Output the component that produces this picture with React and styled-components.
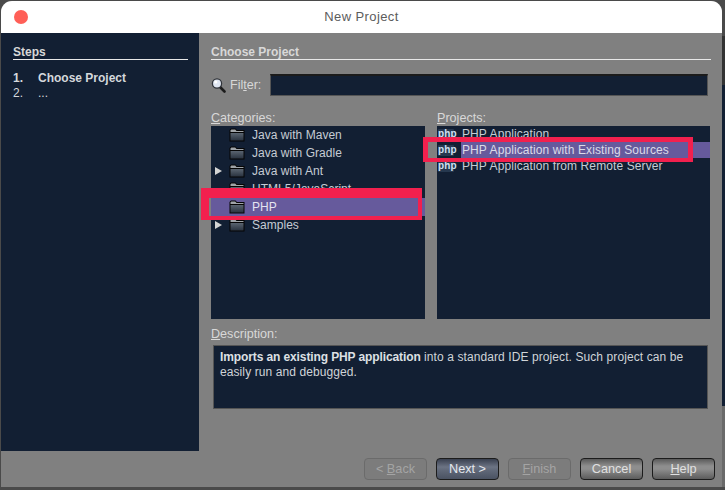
import React from "react";
import styled, { createGlobalStyle } from "styled-components";

const Global = createGlobalStyle`
  html, body { margin: 0; padding: 0; width: 725px; height: 490px; overflow: hidden; background: #3c3c3c; }
  body { font-family: "Liberation Sans", Arial, sans-serif; font-size: 12px; }
  #root { width: 725px; height: 490px; }
`;
const Desktop = styled.div`
  width: 725px; height: 490px; padding: 1px 3px 3px 1px; box-sizing: border-box;
  background: linear-gradient(#4a4a4a 0 36px, #333 36px 85px, #121f33 85px 406px, #6a6a6a 406px 487px, #4a4a4a 487px) right / 3px 100% no-repeat, #4a4a4a;
`;
const Win = styled.div`
  position: relative; width: 721px; height: 486px; display: flex; flex-direction: column;
  background: #808080; border-radius: 11px 11px 0 0; overflow: hidden;
`;
const TitleBar = styled.div`
  height: 32px; flex: none; background: #fff; display: flex; align-items: center; justify-content: center;
  color: #5c5c5c; font-size: 13px; letter-spacing: 0.4px; position: relative; padding-bottom: 2px; box-sizing: border-box;
`;
const Dot = styled.span`
  position: absolute; left: 13px; top: 9px; width: 14px; height: 14px; border-radius: 50%; background: #ff5f57;
`;
const Main = styled.div`flex: 1; display: flex; min-height: 0;`;
const Side = styled.div`
  width: 198px; height: 418px; flex: none; background: #121f33; box-sizing: border-box; padding: 12px 11px 0 12px; color: #d0d4d8;
`;
const Heading = styled.div`
  font-weight: 700; color: #d8d8d8; height: 14px; line-height: 14px; border-bottom: 1px solid #e8e8e8;
`;
const StepList = styled.div`margin-top: 11px; display: grid; grid-template-columns: 25px 1fr; line-height: 15px;`;
const StepCell = styled.div`font-weight: ${p => p.$bold ? 700 : 400}; color: #d4d8dc;`;
const Content = styled.div`flex: 1; padding: 12px 11px 0 12px; display: flex; flex-direction: column; min-width: 0; color: #d4d4d4;`;
const FilterRow = styled.div`display: flex; align-items: center; margin-top: 14px; height: 22px; padding-right: 3px;`;
const FilterLabel = styled.label`margin-left: 4px; width: 40px; flex: none; font-size: 12.5px; color: #d8d8d8;`;
const Input = styled.div`
  flex: 1; height: 22px; box-sizing: border-box; background: #121f33; border: 1px solid #555; border-top: 2px solid #1b1b1b;
`;
const Columns = styled.div`display: flex; gap: 12px; margin-top: 14px;`;
const Col = styled.div`width: ${p => p.$w}px; flex: none;`;
const Label = styled.div`font-size: 12.6px; height: 16px; line-height: 16px; color: #d8d8d8;`;
const List = styled.div`height: 193px; background: #121f33; overflow: hidden;`;
const CatRow = styled.div`
  display: flex; align-items: center; height: 18px; font-size: 12px; letter-spacing: 0.03px; white-space: nowrap;
  color: ${p => p.$sel ? "#e4e4f0" : "#c6ccd4"};
  background: ${p => p.$sel ? "#665a9c" : "transparent"};
`;
const ProjRow = styled.div`
  display: flex; align-items: center; height: 16px; font-size: 12px; letter-spacing: 0.1px; white-space: nowrap;
  color: #c6ccd4; padding-left: 1px;
`;
const Arrow = styled.span`
  width: 0; height: 0; flex: none; border-left: 7px solid #d4d4d4; border-top: 4px solid transparent; border-bottom: 4px solid transparent;
  margin-left: 4px; margin-right: 7px;
`;
const ArrowGap = styled.span`width: 18px; flex: none;`;
const CatText = styled.span`margin-left: 7px;`;
const ProjText = styled.span`
  margin-left: 7px; padding-left: 1px; align-self: stretch; display: flex; align-items: center; flex: 1;
  background: ${p => p.$sel ? "#665a9c" : "transparent"};
  color: ${p => p.$sel ? "#dcdce8" : "#c6ccd4"};
`;
const PhpIcon = styled.span`
  flex: none; width: 16px; height: 11px; line-height: 9px; font-size: 10px; font-weight: 700; color: #cfe0f2; text-align: center;
  background: #26384f; border-radius: 1px;
`;
const DescLabel = styled(Label)`margin-top: 7px;`;
const Desc = styled.div`
  margin-top: 3px; margin-left: 2px; height: 64px; width: 495px; box-sizing: border-box; background: #121f33; border: 1px solid #555;
  padding: 4px 6px; font-size: 12px; line-height: 15px; color: #d0d4d8; letter-spacing: 0.09px;
`;
const Strong = styled.b`letter-spacing: -0.11px; color: #dde0e4;`;
const Bar = styled.div`
  display: flex; justify-content: flex-end; gap: 9px; margin-top: 49px; margin-right: -4px;
`;
const Btn = styled.div`
  width: 63px; height: 22px; box-sizing: border-box; border-radius: 4px; display: flex; align-items: center; justify-content: center;
  font-size: 12.7px; color: #e0e0e0;
  border: 1px solid #1c1c1c;
  background: linear-gradient(#5a5a5a, #8e8e8e 35%, #8e8e8e 50%, #5c5c5c);
`;
const NextBtn = styled(Btn)`
  background: linear-gradient(#39404f, #6c7484 40%, #5e6676 60%, #4a5262); color: #e4e8ee;
`;
const OffBtn = styled(Btn)`
  border-color: #6b6b6b; background: #7c7c7c; color: #a4a4a4;
`;
const BtnLabel = styled.span`white-space: pre;`;
const Mark = styled.div`
  position: absolute; border-style: solid; border-color: #f2204e; box-sizing: border-box; pointer-events: none;
  border-width: ${p => p.$b};
  left: ${p => p.$x}px; top: ${p => p.$y}px; width: ${p => p.$w}px; height: ${p => p.$h}px;
`;
const U = styled.span`text-decoration: underline;`;

const Folder = () => (
  <svg width="16" height="14" viewBox="0 0 16 14" style={{ flex: "none" }}>
    <defs>
      <linearGradient id="fb" x1="0" y1="0" x2="0" y2="1">
        <stop offset="0" stopColor="#5a6470" />
        <stop offset="1" stopColor="#2a3340" />
      </linearGradient>
    </defs>
    <path d="M0.5 13.5V2L2 0.5h4.5L8 2h7.5v11.5z" fill="#050505" />
    <path d="M1.5 4V2.2L2.4 1.5h3.8L7.5 3H14.5v1z" fill="#a0a4a8" />
    <path d="M1.5 5h13v7.5h-13z" fill="url(#fb)" />
  </svg>
);
const Lens = () => (
  <svg width="15" height="16" viewBox="0 0 15 16" style={{ flex: "none" }}>
    <path d="M9 10l4.5 4.5" stroke="#1c1c1c" strokeWidth="2.6" strokeLinecap="round" />
    <circle cx="6" cy="6.5" r="4.6" fill="#dfe6f2" stroke="#30343a" strokeWidth="1.3" />
    <circle cx="4.8" cy="5" r="1.6" fill="#fff" />
  </svg>
);

const cats = [
  ["Java with Maven", false], ["Java with Gradle", false], ["Java with Ant", true],
  ["HTML5/JavaScript", false], ["PHP", false, true], ["Samples", true],
];
const projs = ["PHP Application", "PHP Application with Existing Sources", "PHP Application from Remote Server"];

export default function App() {
  return (
    <Desktop>
      <Global />
      <Win>
        <TitleBar><Dot />New Project</TitleBar>
        <Main>
          <Side>
            <Heading>Steps</Heading>
            <StepList>
              <StepCell $bold>1.</StepCell><StepCell $bold>Choose Project</StepCell>
              <StepCell>2.</StepCell><StepCell>...</StepCell>
            </StepList>
          </Side>
          <Content>
            <Heading>Choose Project</Heading>
            <FilterRow>
              <Lens />
              <FilterLabel>Fil<U>t</U>er:</FilterLabel>
              <Input />
            </FilterRow>
            <Columns>
              <Col $w={214}>
                <Label><U>C</U>ategories:</Label>
                <List>
                  {cats.map(([t, arrow, sel]) => (
                    <CatRow key={t} $sel={sel}>
                      {arrow ? <Arrow /> : <ArrowGap />}
                      <Folder />
                      <CatText>{t}</CatText>
                    </CatRow>
                  ))}
                </List>
              </Col>
              <Col $w={273}>
                <Label><U>P</U>rojects:</Label>
                <List>
                  {projs.map((t, i) => (
                    <ProjRow key={t}>
                      <PhpIcon>php</PhpIcon>
                      <ProjText $sel={i === 1}>{t}</ProjText>
                    </ProjRow>
                  ))}
                </List>
              </Col>
            </Columns>
            <DescLabel><U>D</U>escription:</DescLabel>
            <Desc><Strong>Imports an existing PHP application</Strong> into a standard IDE project. Such project can be easily run and debugged.</Desc>
            <Bar>
              <OffBtn><BtnLabel>&lt; <U>B</U>ack</BtnLabel></OffBtn>
              <NextBtn><BtnLabel>Next &gt;</BtnLabel></NextBtn>
              <OffBtn><BtnLabel><U>F</U>inish</BtnLabel></OffBtn>
              <Btn><BtnLabel>Cancel</BtnLabel></Btn>
              <Btn><BtnLabel><U>H</U>elp</BtnLabel></Btn>
            </Bar>
          </Content>
        </Main>
        <Mark $x={200} $y={187} $w={221} $h={32} $b="10px 4px 4px 8px" />
        <Mark $x={422} $y={136} $w={270} $h={25} $b="5px 5px 4px 5px" />
      </Win>
    </Desktop>
  );
}
